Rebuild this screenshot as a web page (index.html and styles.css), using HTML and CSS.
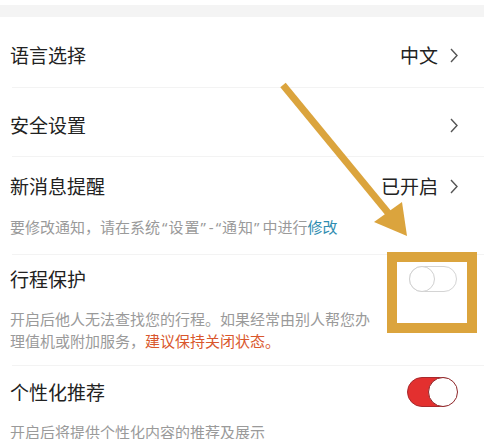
FILE: index.html
```html
<!DOCTYPE html>
<html lang="zh-CN">
<head>
    <meta charset="utf-8">
    <meta name="viewport" content="width=device-width, initial-scale=1">
    <link rel="stylesheet" href="styles.css">
</head>
<body>
    <div class="top-bar"></div>

    <section class="settings">
        <div class="item item-first">
            <div class="row">
                <span class="title">语言选择</span>
                <span class="value">中文
                    <svg class="chevron" viewBox="0 0 8 15"><polyline points="1,1 7,7.5 1,14"/></svg>
                </span>
            </div>
        </div>

        <div class="item item-second">
            <div class="row">
                <span class="title">安全设置</span>
                <span class="value">
                    <svg class="chevron" viewBox="0 0 8 15"><polyline points="1,1 7,7.5 1,14"/></svg>
                </span>
            </div>
        </div>

        <div class="item item-third">
            <div class="row">
                <span class="title">新消息提醒</span>
                <span class="value">已开启
                    <svg class="chevron" viewBox="0 0 8 15"><polyline points="1,1 7,7.5 1,14"/></svg>
                </span>
            </div>
            <p class="hint">要修改通知，请在系统<span class="q">“设置”</span>-<span class="q">“通知”</span>中进行<span class="link">修改</span></p>
        </div>

        <div class="item item-fourth">
            <div class="row">
                <span class="title">行程保护</span>
                <span class="switch"></span>
            </div>
            <p class="hint">开启后他人无法查找您的行程。如果经常由别人帮您办<br>理值机或附加服务，<span class="warn">建议保持关闭状态。</span></p>
        </div>

        <div class="item item-fifth">
            <div class="row">
                <span class="title">个性化推荐</span>
                <span class="switch on"></span>
            </div>
            <p class="hint">开启后将提供个性化内容的推荐及展示</p>
        </div>
    </section>

    <!-- annotation over the screenshot -->
    <svg class="arrow" viewBox="0 0 490 439">
        <line x1="283" y1="85" x2="394" y2="220"/>
        <polygon points="407,236 374,222 402,202"/>
    </svg>
    <div class="mark-box"></div>
</body>
</html>
```

FILE: styles.css
```css
body {
    margin: 0;
    background: #fff;
    font-family: "Noto Sans CJK SC", "Noto Sans", sans-serif;
    color: #222;
    position: relative;
    width: 490px;
    height: 439px;
    overflow: hidden;
}

.top-bar {
    margin-top: 5px;
    margin-right: 6px;
    height: 12px;
    background: #f4f4f4;
}

.item {
    padding-left: 10px;
    padding-right: 32px;
    position: relative;
}

.item::after {
    content: "";
    position: absolute;
    left: 12px;
    right: 6px;
    bottom: 0;
    height: 1px;
    background: #f3f3f3;
}

.item-first {
    padding-top: 23px;
    padding-bottom: 18px;
}

.item-second {
    padding-top: 22px;
    padding-bottom: 17px;
}

.item-third {
    padding-top: 14px;
    padding-bottom: 17px;
}

.item-fourth {
    padding-top: 9px;
    padding-bottom: 14px;
}

.item-fifth {
    padding-top: 11px;
}

.item-fifth::after {
    display: none;
}

.row {
    display: flex;
    justify-content: space-between;
    align-items: center;
    height: 30px;
}

.title {
    font-size: 19px;
    line-height: 30px;
}

.value {
    display: flex;
    align-items: center;
    gap: 12px;
    font-size: 19px;
    line-height: 30px;
}

.chevron {
    width: 8px;
    height: 15px;
    fill: none;
    stroke: #555;
    stroke-width: 1.4;
}

.hint {
    margin: 15px 0 0;
    font-family: "Noto Sans", "Noto Sans CJK SC", sans-serif;
    font-size: 15px;
    line-height: 22px;
    color: #9a9a9a;
}

.hint .q {
    margin: 0 2px;
    letter-spacing: 1px;
}

.item-fourth .hint,
.item-fifth .hint {
    margin-top: 14px;
}

.link {
    color: #2f8db0;
}

.warn {
    color: #d9572c;
}

.switch {
    position: relative;
    width: 46px;
    height: 24px;
    border: 1.5px solid #d4d4d4;
    border-radius: 14px;
    background: #fff;
    margin-right: 1px;
}

.switch::before {
    content: "";
    position: absolute;
    left: -1.5px;
    top: -1.5px;
    width: 24px;
    height: 24px;
    border: 1.5px solid #d0d0d0;
    border-radius: 50%;
    background: #fff;
}

.switch.on {
    width: 48px;
    height: 28px;
    border-color: #a82a2e;
    background: #e3302f;
    border-radius: 16px;
}

.switch.on::before {
    left: auto;
    right: -1.5px;
    width: 28px;
    height: 28px;
    border-color: #8e2629;
}

.arrow {
    position: absolute;
    left: 0;
    top: 0;
    width: 490px;
    height: 439px;
    pointer-events: none;
}

.arrow line {
    stroke: #dba43d;
    stroke-width: 7;
}

.arrow polygon {
    fill: #dba43d;
}

.mark-box {
    position: absolute;
    left: 387px;
    top: 252px;
    width: 70px;
    height: 61px;
    border: 10px solid #dba43d;
}
```
